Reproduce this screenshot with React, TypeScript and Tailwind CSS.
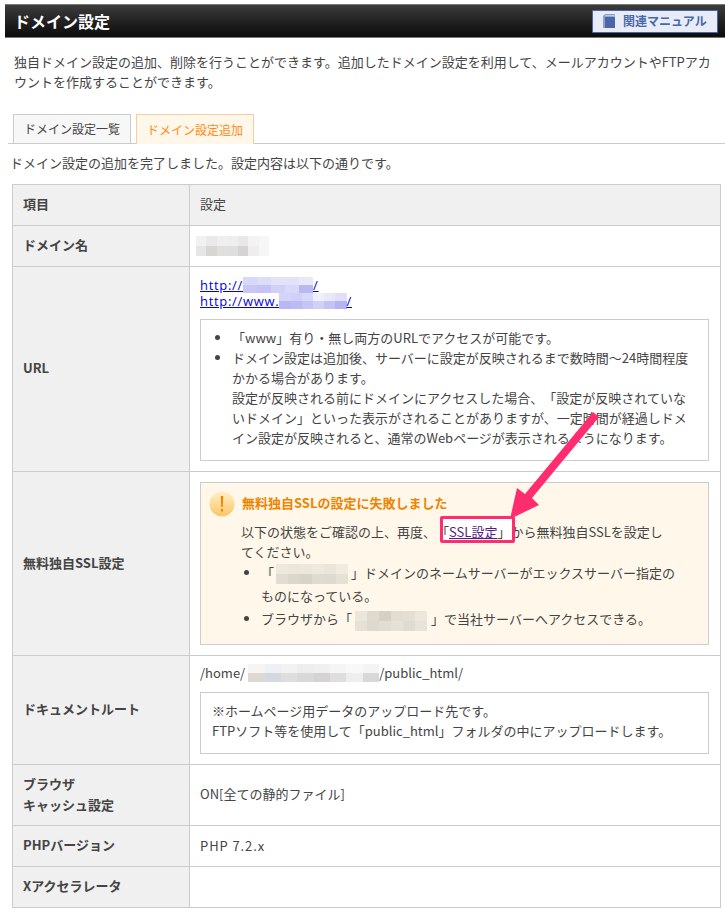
const font = '[font-family:"Noto_Sans_CJK_JP","Noto_Sans",sans-serif]';

function Blur({ cells, w, h = 20, className }: { cells: string[][]; w: number; h?: number; className?: string }) {
  // pixelated mosaic that hides a domain name
  return (
    <span className={`inline-flex flex-col align-middle ${className ?? ''}`} style={{ width: w, height: h }}>
      {cells.map((row, i) => (
        <span key={i} className="flex flex-1">
          {row.map((c, j) => (
            <span key={j} className="flex-1" style={{ background: c }} />
          ))}
        </span>
      ))}
    </span>
  );
}

const grayCells = [
  ['#f1f1f1', '#e9e9e9', '#efefef', '#eeeeee', '#e8e8e8', '#f3f3f3', '#f6f6f6'],
  ['#e6e6e6', '#d8d6d3', '#e0dfdd', '#dedede', '#d6d4d1', '#eeeeee', '#f6f6f6'],
];
const blueCells1 = [
  ['#d8d8fb', '#dcdcfb', '#e2e2fb', '#e2e2fb', '#e8e8fc'],
  ['#c8c8f6', '#c4c4f6', '#d0d0f8', '#d8d8fa', '#b8b8f2'],
];
const blueCells2 = [
  ['#d4d4fb', '#d0d0fb', '#d8d8fb', '#edf0fc', '#e8e8fb', '#e2defa'],
  ['#b8b8f4', '#bcbcf4', '#c4c4f6', '#d0d0f8', '#c4c4f4', '#b4b4f0'],
];
const beigeCells = [
  ['#efe9dc', '#ebe6da', '#ece7da', '#eee9dd', '#eae5d9', '#f0ebdf'],
  ['#e2ddd2', '#dcd7cb', '#d8d3c7', '#e0dbcf', '#dfdacf', '#e6e1d5'],
];
const beigeCells2 = [
  ['#ebe6da', '#dfdacf', '#d5d0c4', '#e2ddd2', '#e4dfd3', '#ece7db'],
  ['#e6e1d6', '#ded9ce', '#e2ddd2', '#e6e1d6', '#e0dbd0', '#e8e3d8'],
];
const pathCells = [
  ['#f8f4f0', '#eef0f6', '#f2f2f2', '#eeeeee', '#f0f0f0', '#f5f5f5', '#f8f8f8', '#f4f4f4'],
  ['#dcd8d2', '#d4d8e0', '#dedede', '#d8d8d8', '#d4d2d2', '#dedede', '#eeeeee', '#d8d8d8'],
];

function Row({ label, className, children }: { label: React.ReactNode; className?: string; children?: React.ReactNode }) {
  return (
    <div className="flex border-b border-[#ccc]">
      <div className="w-[177px] shrink-0 border-r border-[#ccc] bg-[#f0f0f0] px-[10px] pb-[3px] flex items-center font-bold text-[#444] leading-[21px]">
        {label}
      </div>
      <div className={`flex-1 min-w-0 pl-[10px] pr-[11px] ${className ?? ''}`}>{children}</div>
    </div>
  );
}

export default function App() {
  return (
    <div className={`relative w-[725px] h-[913px] overflow-hidden bg-white text-[13px] leading-[20px] text-[#444] [text-spacing-trim:space-all] ${font}`}>
      <div className="mt-[4px] ml-[5px] h-[34px] flex items-center justify-between border-y border-[#777] bg-gradient-to-b from-[#3c3c3c] to-[#0c0c0c] pl-[9px] pr-[7px]">
        <h1 className="text-[16px] font-bold text-white">ドメイン設定</h1>
        <a className="flex items-center w-[126px] h-[23px] border border-[#4a68a8] bg-[#e8ecf8] pl-[10px] text-[#4a68a8] font-bold text-[12px] rounded-[1px]">
          <svg width="12" height="14" viewBox="0 0 12 14" className="mr-[8px] shrink-0">
            <path d="M0 2 L2 0 H12 V1.5 H2 V14 H0 Z" fill="#8ea0c8" />
            <rect x="2" y="2.5" width="10" height="11.5" fill="#4a68a8" />
          </svg>
          関連マニュアル
        </a>
      </div>

      <p className="mt-[14px] ml-[14px] w-[702px] leading-[20px]">
        独自ドメイン設定の追加、削除を行うことができます。追加したドメイン設定を利用して、メールアカウントやFTPアカウントを作成することができます。
      </p>

      <div className="mt-[22px] ml-[8px] h-[30px] flex items-end gap-[5px] border-b border-[#ccc] pl-[5px]">
        <div className="w-[118px] h-[30px] -mb-px border border-[#ccc] bg-[#f7f7f7] flex items-center justify-center text-[12px]">ドメイン設定一覧</div>
        <div className="w-[118px] h-[30px] -mb-px border border-b-0 border-[#f5cfa0] bg-[#fff8ea] flex items-center justify-center text-[12px] text-[#ff8a14]">ドメイン設定追加</div>
      </div>

      <p className="mt-[9px] ml-[10px]">ドメイン設定の追加を完了しました。設定内容は以下の通りです。</p>

      <div className="mt-[11px] ml-[12px] w-[709px] border-t border-l border-r border-[#ccc]">
        <div className="flex border-b border-[#ccc] h-[41px] bg-[#f0f0f0]">
          <div className="w-[177px] shrink-0 border-r border-[#ccc] px-[10px] pb-[2px] flex items-center font-bold">項目</div>
          <div className="flex-1 pl-[10px] pb-[2px] flex items-center">設定</div>
        </div>

        <Row label="ドメイン名" className="h-[40px] flex items-center">
          <Blur cells={grayCells} w={73} h={20} className="-ml-[4px]" />
        </Row>

        <Row label="URL" className="h-[204px] pt-[10px]">
          <div className="leading-[16px] [font-family:'Open_Sans',sans-serif] tracking-[0.7px]">
            <a className="flex text-[#0000ee] underline">http://<Blur cells={blueCells1} w={70} h={16} />/</a>
            <a className="flex text-[#0000ee] underline">http://www.<Blur cells={blueCells2} w={67} h={16} />/</a>
          </div>
          <div className="mt-[10px] h-[142px] border border-[#ccc] pt-[8px] pl-[31px] pr-[14px]">
            <ul className="list-disc">
              <li>「www」有り・無し両方のURLでアクセスが可能です。</li>
              <li>
                ドメイン設定は追加後、サーバーに設定が反映されるまで数時間～24時間程度かかる場合があります。
                <br />
                設定が反映される前にドメインにアクセスした場合、「設定が反映されていないドメイン」といった表示がされることがありますが、一定時間が経過しドメイン設定が反映されると、通常のWebページが表示されるようになります。
              </li>
            </ul>
          </div>
        </Row>

        <Row label="無料独自SSL設定" className="h-[183px] pt-[10px]">
          <div className="h-[163px] border border-[#ccc] bg-[#fff8ea] pt-[8px] pl-[8px] pr-[28px]">
            <div className="flex items-center gap-[7px]">
              <svg width="26" height="26" viewBox="0 0 26 26" className="shrink-0">
                <defs>
                  <linearGradient id="warn" x1="0" y1="0" x2="0" y2="1">
                    <stop offset="0" stopColor="#fff0c4" />
                    <stop offset="1" stopColor="#fcc468" />
                  </linearGradient>
                </defs>
                <circle cx="13" cy="13" r="12.5" fill="url(#warn)" />
                <path d="M11.8 5 H14.2 L13.7 16 H12.3 Z" fill="#f08300" />
                <rect x="12" y="18" width="2" height="2.5" fill="#f08300" />
              </svg>
              <span className="font-bold text-[#f08300] -mt-[2px]">無料独自SSLの設定に失敗しました</span>
            </div>
            <div className="mt-[5px] pl-[32px]">
              <p>
                以下の状態をご確認の上、再度、
                <span className="relative z-0">
                  「<a className="text-[#551a8b] underline">SSL設定</a>」
                  <span className="absolute left-[4px] -top-[6px] w-[75px] h-[27px] -z-10 bg-white border-[3px] border-[#ff2d6f] rounded-[2px]" />
                </span>
                から無料独自SSLを設定し<br />てください。
              </p>
              <ul className="list-disc pl-[20px] -mt-[1px] leading-[23px]">
                <li>
                  「<Blur cells={beigeCells} w={72} h={20} className="ml-[2px] mr-[3px]" />」ドメインのネームサーバーがエックスサーバー指定の<br />ものになっている。
                </li>
                <li>
                  ブラウザから「<Blur cells={beigeCells2} w={72} h={20} className="ml-[3px] mr-[4px]" />」で当社サーバーへアクセスできる。
                </li>
              </ul>
            </div>
          </div>
        </Row>

        <Row label="ドキュメントルート" className="h-[108px] pt-[7px]">
          <div className="flex items-center">/home/<Blur cells={pathCells} w={131} h={18} className="ml-[3px]" />/public_html/</div>
          <div className="mt-[9px] h-[62px] border border-[#ccc] pt-[8px] pl-[11px]">
            ※ホームページ用データのアップロード先です。
            <br />
            FTPソフト等を使用して「public_html」フォルダの中にアップロードします。
          </div>
        </Row>

        <Row label={<span>ブラウザ<br />キャッシュ設定</span>} className="h-[60px] pb-[2px] flex items-center">
          ON[全ての静的ファイル]
        </Row>
        <Row label="PHPバージョン" className="h-[40px] flex items-center tracking-[0.9px]">PHP 7.2.x</Row>
        <Row label="Xアクセラレータ" className="h-[40px]" />
      </div>

      {/* annotation arrow added on top of the screenshot */}
      <svg className="absolute left-0 top-0" width="725" height="913" viewBox="0 0 725 913">
        <path d="M593 412 L599 417 L532 498 L539 505 L510 519 L517 488 L525 494 Z" fill="#ff2d6f" />
      </svg>
    </div>
  );
}
